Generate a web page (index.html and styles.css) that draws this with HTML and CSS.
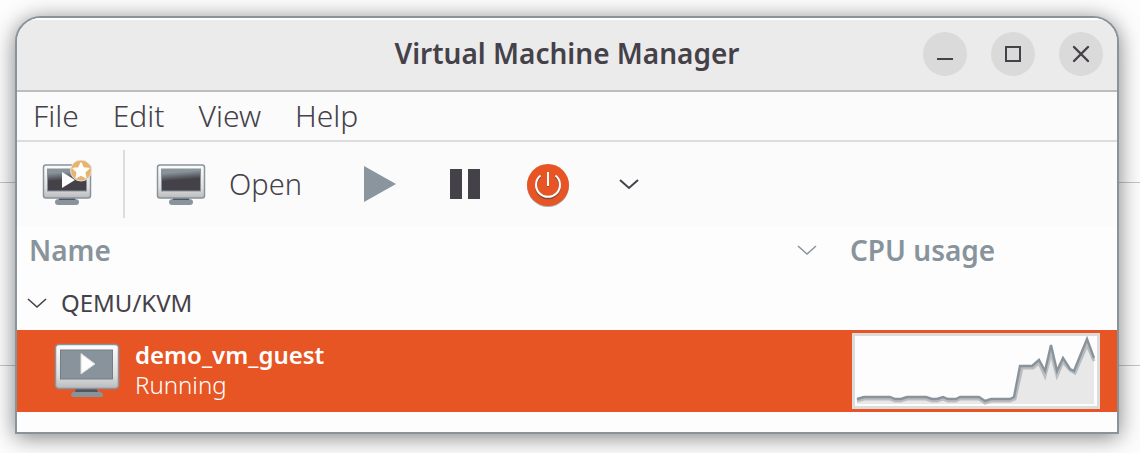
FILE: index.html
```html
<!DOCTYPE html>
<html lang="en">
<head>
<meta charset="utf-8">
<title>Virtual Machine Manager</title>
<link rel="stylesheet" href="styles.css">
</head>
<body>
<svg class="defs" width="0" height="0" aria-hidden="true">
  <defs>
    <linearGradient id="bezel" x1="0" y1="0" x2="0" y2="1">
      <stop offset="0" stop-color="#fdfdfd"/><stop offset="0.7" stop-color="#dedede"/><stop offset="1" stop-color="#b9babc"/>
    </linearGradient>
    <linearGradient id="dark" x1="0.36" y1="0" x2="0.5" y2="1">
      <stop offset="0.15" stop-color="#88939c"/><stop offset="0.5" stop-color="#454149"/>
    </linearGradient>
  </defs>
</svg>
<main class="window">
  <header class="titlebar">
    <h1 class="title">Virtual Machine Manager</h1>
    <div class="controls">
      <button class="control" aria-label="Minimize"><svg width="44" height="44" viewBox="0 0 44 44"><path d="M14 27h16" stroke="#454149" stroke-width="2"/></svg></button>
      <button class="control" aria-label="Maximize"><svg width="44" height="44" viewBox="0 0 44 44"><path d="M15 15h14v14h-14z" fill="none" stroke="#454149" stroke-width="2"/></svg></button>
      <button class="control" aria-label="Close"><svg width="44" height="44" viewBox="0 0 44 44"><path d="M15 15l14 14M29 15l-14 14" stroke="#454149" stroke-width="2.4" stroke-linecap="round"/></svg></button>
    </div>
  </header>
  <nav class="menubar">
    <button class="menu">File</button>
    <button class="menu">Edit</button>
    <button class="menu">View</button>
    <button class="menu">Help</button>
  </nav>
  <div class="toolbar">
    <button class="tool new" aria-label="New virtual machine">
      <svg width="50" height="48" viewBox="0 0 50 48">
        <path d="M13 42q0-3 4-3h16q4 0 4 3t-3 3h-18q-3 0-3-3z" fill="#88939c"/><path d="M17 37h16v3h-16z" fill="#55555d"/>
        <rect x="1.500" y="5" width="47" height="33" rx="2.500" fill="url(#bezel)" stroke="#88939c" stroke-width="1.500"/>
        <rect x="5.500" y="9" width="39" height="22" fill="url(#dark)" stroke="#88939c"/>
        <path d="M20 12l13 8-13 8z" fill="#fdfdfd"/>
        <circle cx="39" cy="10.500" r="10.500" fill="#e7b46c" stroke="#e4e4e6"/>
        <path d="M39 3l2.300 5 5.400.5-4.100 3.700 1.200 5.500-4.800-2.900-4.800 2.900 1.200-5.500-4.100-3.700 5.400-.5z" fill="#fff" stroke="#fff" stroke-width="1.500" stroke-linejoin="round"/>
      </svg>
    </button>
    <span class="divider"></span>
    <button class="tool open">
      <svg width="50" height="48" viewBox="0 0 50 48" aria-hidden="true">
        <path d="M13 42q0-3 4-3h16q4 0 4 3t-3 3h-18q-3 0-3-3z" fill="#88939c"/><path d="M17 37h16v3h-16z" fill="#55555d"/>
        <rect x="1.500" y="5" width="47" height="33" rx="2.500" fill="url(#bezel)" stroke="#88939c" stroke-width="1.500"/>
        <rect x="5.500" y="9" width="39" height="22" fill="url(#dark)" stroke="#88939c"/>
      </svg>
      <span>Open</span>
    </button>
    <button class="tool run" aria-label="Run"><svg width="34" height="38" viewBox="0 0 34 38"><path d="M1 1l32 18L1 37z" fill="#8a959e"/></svg></button>
    <button class="tool pause" aria-label="Pause"><svg width="30" height="30" viewBox="0 0 30 30"><path d="M0 0h12v30H0zM18 0h12v30H18z" fill="#454149"/></svg></button>
    <button class="tool power" aria-label="Shut down">
      <svg width="44" height="46" viewBox="0 -2 44 46">
        <circle cx="22" cy="23" r="21" fill="#a9adb2"/><circle cx="22" cy="22" r="21" fill="#e75524"/>
        <path d="M14.500 14A12 12 0 1 0 29.500 14M22 10v14" fill="none" stroke="#7b4b42" stroke-width="2"/>
        <path d="M14.500 12.500A12 12 0 1 0 29.500 12.500M22 9v14" fill="none" stroke="#fff" stroke-width="2"/>
      </svg>
    </button>
    <button class="tool more" aria-label="Shutdown options"><svg width="20" height="12" viewBox="0 0 20 12"><path d="M1 2l9 8 9-8" fill="none" stroke="#454149" stroke-width="2"/></svg></button>
  </div>
  <table class="list">
    <thead>
      <tr>
        <th scope="col"><div class="heading"><span>Name</span><svg width="20" height="12" viewBox="0 0 20 12" aria-hidden="true"><path d="M1 2l9 8 9-8" fill="none" stroke="#88939c" stroke-width="1.500"/></svg></div></th>
        <th scope="col" class="usage">CPU usage</th>
      </tr>
    </thead>
    <tbody>
      <tr class="host">
        <td colspan="2"><button class="expander" aria-expanded="true"><svg width="20" height="12" viewBox="0 0 20 12" aria-hidden="true"><path d="M1 2l9 8 9-8" fill="none" stroke="#454149" stroke-width="1.600"/></svg><span>QEMU/KVM</span></button></td>
      </tr>
      <tr class="guest">
        <td>
          <div class="vm">
            <svg width="66" height="56" viewBox="0 0 66 56" aria-hidden="true">
              <path d="M23 44h18l2 4q6 1 6 4 0 2-3 2H20q-3 0-3-2 0-3 5-4z" fill="#88939c"/><path d="M22 45h20l2 4H21z" fill="#55555d"/>
              <rect x="1.500" y="1.500" width="63" height="44" rx="3.500" fill="url(#bezel)" stroke="#88939c" stroke-width="1.500"/>
              <rect x="6.500" y="7" width="52" height="29" fill="#88939c" stroke="#747e87"/>
              <path d="M27 10.500l14 10.500-14 10z" fill="#fdfdfd" stroke="#d9dadb" stroke-width="1"/>
            </svg>
            <div class="labels"><strong>demo_vm_guest</strong><span>Running</span></div>
          </div>
        </td>
        <td class="usage">
          <svg class="graph" viewBox="0 0 242 70" preserveAspectRatio="none" role="img" aria-label="CPU usage history">
            <path d="M2 63L9 61H35L40 63H46L52 61H71L77 63H82L88 61L93 63H101L105 61H124L130 65L136 63H155L159 61L165 30H177L184 24L190 35L196 9L202 35L208 22L215 33L219 35L232 3L239 22V68H2z" fill="#e8e8e9"/>
            <path d="M2 65L9 63H35L40 65H46L52 63H71L77 65H82L88 63L93 65H101L105 63H124L130 67L136 65H155L160 63L167 32H178L184 27L190 40L196 17L202 40L208 26L215 34L220 37L232 9L239 25" fill="none" stroke="#bbbcbe" stroke-width="3"/>
            <path d="M2 63L9 61H35L40 63H46L52 61H71L77 63H82L88 61L93 63H101L105 61H124L130 65L136 63H155L159 61L165 30H177L184 24L190 35L196 9L202 35L208 22L215 33L219 35L232 3L239 22" fill="none" stroke="#88939c" stroke-width="2.400"/>
          </svg>
        </td>
      </tr>
    </tbody>
  </table>
</main>
</body>
</html>
```
FILE: styles.css
```css
* { box-sizing: border-box; }
body {
  margin: 0;
  padding: 16px 21px 19px 15px;
  color: #454149;
  font-family: "Noto Sans", "Open Sans", sans-serif;
  background:
    linear-gradient(#c3c6c9, #c3c6c9) 0 182px / 100% 1px no-repeat,
    linear-gradient(#c3c6c9, #c3c6c9) 0 365px / 100% 1px no-repeat,
    #fdfdfd;
}
.defs { position: absolute; }
button {
  margin: 0;
  padding: 0;
  border: 0;
  background: none;
  color: inherit;
  font: inherit;
}
svg { display: block; flex: none; }
.window {
  overflow: hidden;
  padding-bottom: 20px;
  border: 2px solid #88939c;
  border-radius: 26px 26px 0 0;
  background: #fdfdfd;
  box-shadow: 0 3px 22px rgba(0, 0, 0, 0.5);
}
.titlebar {
  display: grid;
  grid-template-columns: 1fr auto 1fr;
  align-items: center;
  height: 74px;
  border-bottom: 2px solid #bdbdbf;
  background: #ebebeb;
  box-shadow: inset 0 2px #fff;
}
.title {
  grid-column: 2;
  margin: 0;
  padding-bottom: 2px;
  font-size: 28px;
  line-height: 40px;
  font-weight: 600;
}
.controls {
  display: flex;
  justify-content: flex-end;
  gap: 24px;
  padding-right: 14px;
}
.control {
  width: 44px;
  height: 44px;
  border-radius: 50%;
  background: #dadada;
}
.menubar {
  display: flex;
  gap: 34px;
  align-items: center;
  height: 50px;
  padding: 0 16px;
  border-bottom: 2px solid #dcdcdc;
  background: #fbfbfb;
  font-size: 30px;
  line-height: 40px;
  font-weight: 300;
}
.toolbar {
  display: flex;
  align-items: center;
  height: 84px;
  padding: 0 25px;
  background: #fbfbfb;
  font-size: 29px;
  line-height: 40px;
  font-weight: 300;
}
.divider {
  width: 2px;
  height: 68px;
  margin: 0 31px;
  background: #dcdcdc;
}
.open {
  display: flex;
  align-items: center;
  gap: 23px;
}
.run { margin-left: 61px; }
.pause { margin-left: 53px; }
.power { margin-left: 46px; }
.more { margin-left: 49px; }
.list {
  width: 100%;
  border-collapse: collapse;
  table-layout: fixed;
}
th, td { padding: 0; text-align: left; }
th {
  height: 50px;
  padding: 0 0 2px 12px;
  color: #88939c;
  font-size: 28px;
  line-height: 40px;
  font-weight: 600;
}
.heading {
  display: flex;
  align-items: center;
  justify-content: space-between;
  padding-right: 17px;
}
.usage { width: 283px; padding-left: 16px; }
.host td { height: 54px; padding-left: 10px; }
.expander {
  display: flex;
  align-items: center;
  gap: 14px;
  font-size: 24px;
  line-height: 32px;
}
.guest { background: #e75524; color: #fff; }
.guest td { height: 82px; }
.vm {
  display: flex;
  align-items: center;
  gap: 15px;
  padding-left: 37px;
}
.labels {
  display: flex;
  flex-direction: column;
  padding-bottom: 2px;
  font-size: 24px;
  line-height: 30px;
}
.labels strong { font-weight: 600; }
.labels span { font-weight: 300; }
.guest .usage { padding: 0 17px 0 18px; }
.graph {
  width: 100%;
  height: 76px;
  border: 3px solid #dcdcdc;
  background: #fdfdfd;
}
```
